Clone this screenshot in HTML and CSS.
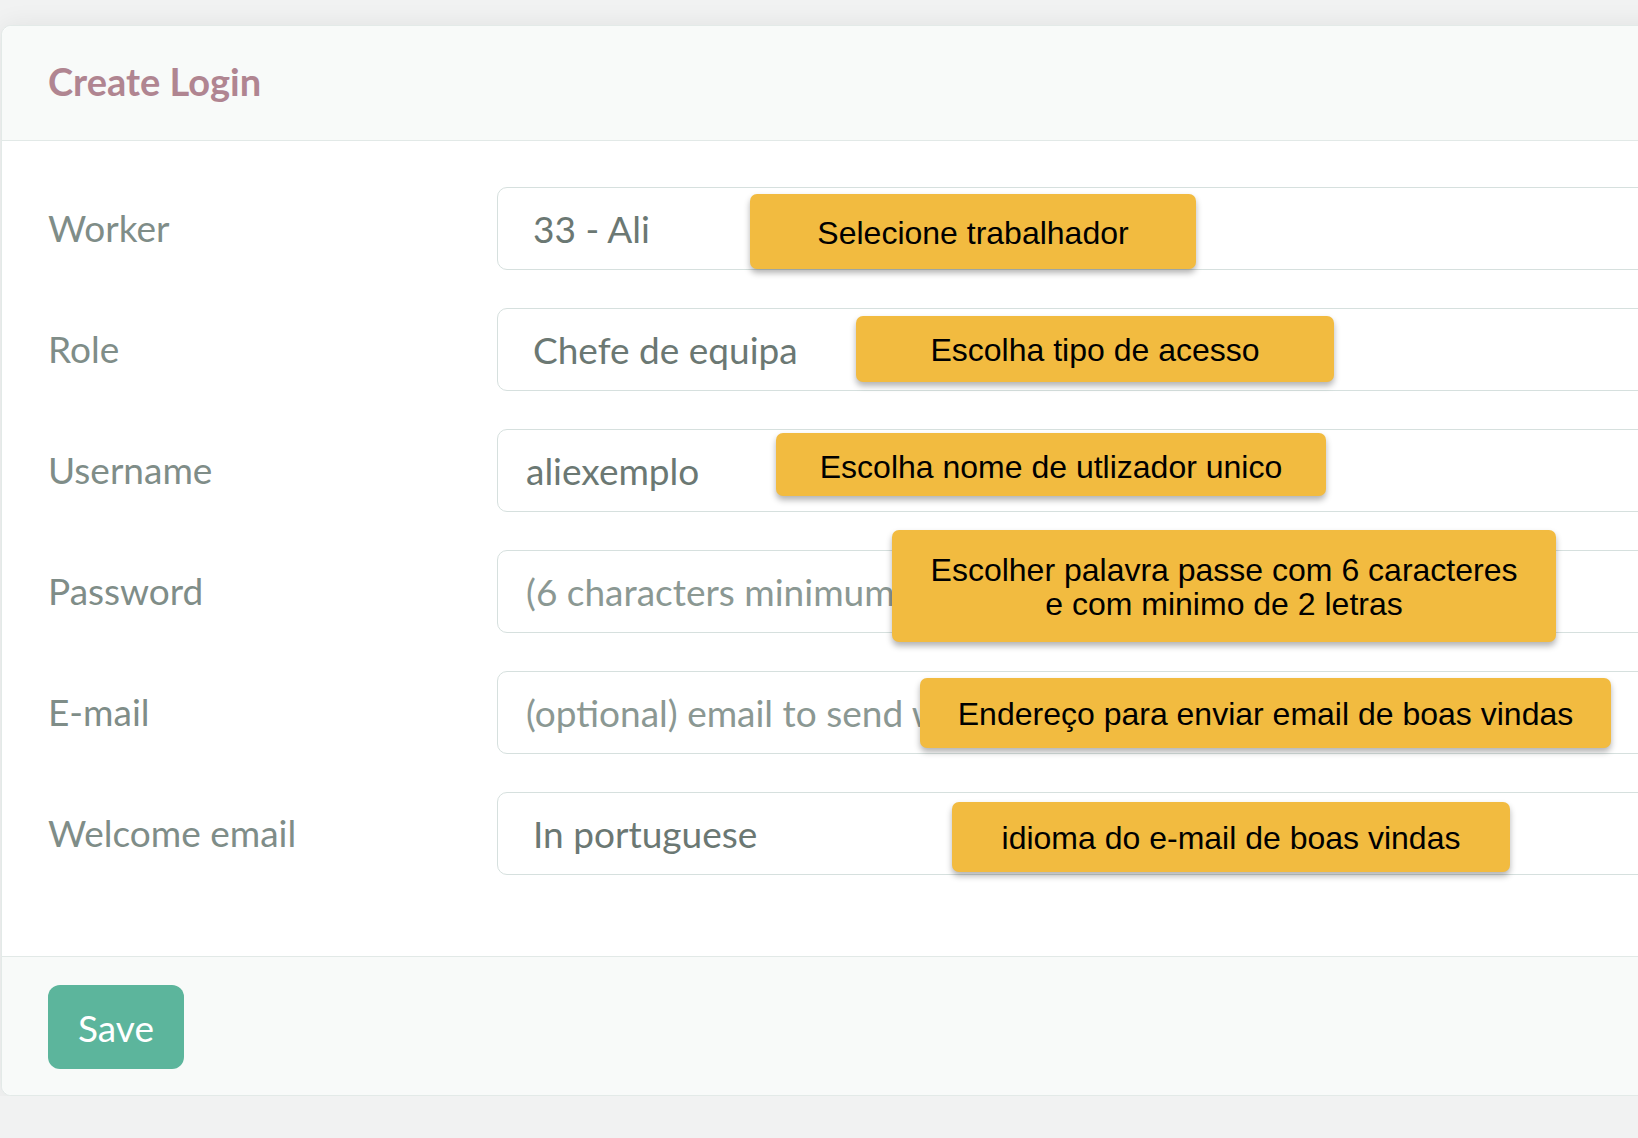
FILE: index.html
```html
<!DOCTYPE html>
<html>

<head>
    <title>Create Login</title>
    <link rel="stylesheet" href="styles.css">
</head>

<body>
    <div class="card">
        <div class="card-header">
            <h2 class="card-title">Create Login</h2>
        </div>
        <form class="card-body">
            <div class="form-row">
                <label class="form-label">Worker</label>
                <select class="field field-select">
                    <option>33 - Ali</option>
                </select>
                <div class="hint hint-worker">Selecione trabalhador</div>
            </div>
            <div class="form-row">
                <label class="form-label">Role</label>
                <select class="field field-select">
                    <option>Chefe de equipa</option>
                </select>
                <div class="hint hint-role">Escolha tipo de acesso</div>
            </div>
            <div class="form-row">
                <label class="form-label">Username</label>
                <input class="field" type="text" value="aliexemplo">
                <div class="hint hint-username">Escolha nome de utlizador unico</div>
            </div>
            <div class="form-row">
                <label class="form-label">Password</label>
                <input class="field" type="password" placeholder="(6 characters minimum)">
                <div class="hint hint-password">Escolher palavra passe com 6 caracteres<br>e com minimo de 2 letras</div>
            </div>
            <div class="form-row">
                <label class="form-label">E-mail</label>
                <input class="field" type="email" placeholder="(optional) email to send welcome message">
                <div class="hint hint-email">Endereço para enviar email de boas vindas</div>
            </div>
            <div class="form-row">
                <label class="form-label">Welcome email</label>
                <select class="field field-select">
                    <option>In portuguese</option>
                </select>
                <div class="hint hint-welcome">idioma do e-mail de boas vindas</div>
            </div>
        </form>
        <div class="card-footer">
            <button class="btn-save">Save</button>
        </div>
    </div>
</body>

</html>
```

FILE: styles.css
```css
body {
    margin: 0;
    padding-top: 25px;
    background-color: #f1f2f2;
    font-family: Lato, "Open Sans", sans-serif;
    overflow: hidden;
}

.card {
    margin-left: 1px;
    width: 1720px;
    background-color: #fff;
    border: 1px solid #e3eae8;
    border-radius: 10px;
    box-shadow: 0 0 26px rgba(0, 0, 0, 0.07);
}

.card-header {
    box-sizing: border-box;
    height: 115px;
    padding: 0 46px 5px;
    display: flex;
    align-items: center;
    background-color: #f8faf9;
    border-bottom: 1px solid #e2e9e7;
    border-radius: 10px 10px 0 0;
}

.card-title {
    margin: 0;
    font-size: 38px;
    font-weight: 700;
    color: #b08591;
}

.card-body {
    margin: 0;
    padding: 46px 46px 43px;
}

.form-row {
    position: relative;
    display: grid;
    grid-template-columns: 449px 1fr;
    align-items: center;
    margin-bottom: 38px;
}

.form-label {
    font-size: 37px;
    line-height: 1;
    margin-top: -3px;
    color: #7f8d88;
}

.field {
    box-sizing: border-box;
    height: 83px;
    width: 100%;
    padding: 0 28px;
    border: 1px solid #d6e0de;
    border-radius: 10px;
    background-color: #fff;
    font-family: inherit;
    font-size: 37px;
    color: #6b7873;
    outline: none;
}

.field::placeholder {
    color: #8b9893;
}

.field-select {
    appearance: none;
    padding-left: 35px;
}

.hint {
    position: absolute;
    box-sizing: border-box;
    display: flex;
    align-items: center;
    justify-content: center;
    padding-top: 2px;
    text-align: center;
    background-color: #f2bb40;
    border-radius: 7px;
    box-shadow: 0 4px 6px rgba(0, 0, 0, 0.3);
    font-family: "Liberation Sans", Arial, sans-serif;
    font-size: 32px;
    line-height: 34px;
    color: #000;
}

.hint-worker {
    left: 702px;
    top: 7px;
    width: 446px;
    height: 75px;
}

.hint-role {
    left: 808px;
    top: 8px;
    width: 478px;
    height: 66px;
}

.hint-username {
    left: 728px;
    top: 4px;
    width: 550px;
    height: 63px;
    padding-top: 5px;
}

.hint-password {
    left: 844px;
    top: -20px;
    width: 664px;
    height: 112px;
}

.hint-email {
    left: 872px;
    top: 7px;
    width: 691px;
    height: 70px;
}

.hint-welcome {
    left: 904px;
    top: 10px;
    width: 558px;
    height: 70px;
}

.card-footer {
    padding: 28px 46px 26px;
    background-color: #f8faf9;
    border-top: 1px solid #e2e9e7;
    border-radius: 0 0 10px 10px;
}

.btn-save {
    width: 136px;
    height: 84px;
    border: 0;
    border-radius: 12px;
    background-color: #5cb59c;
    color: #fff;
    font-family: inherit;
    font-size: 37px;
    outline: none;
}
```
